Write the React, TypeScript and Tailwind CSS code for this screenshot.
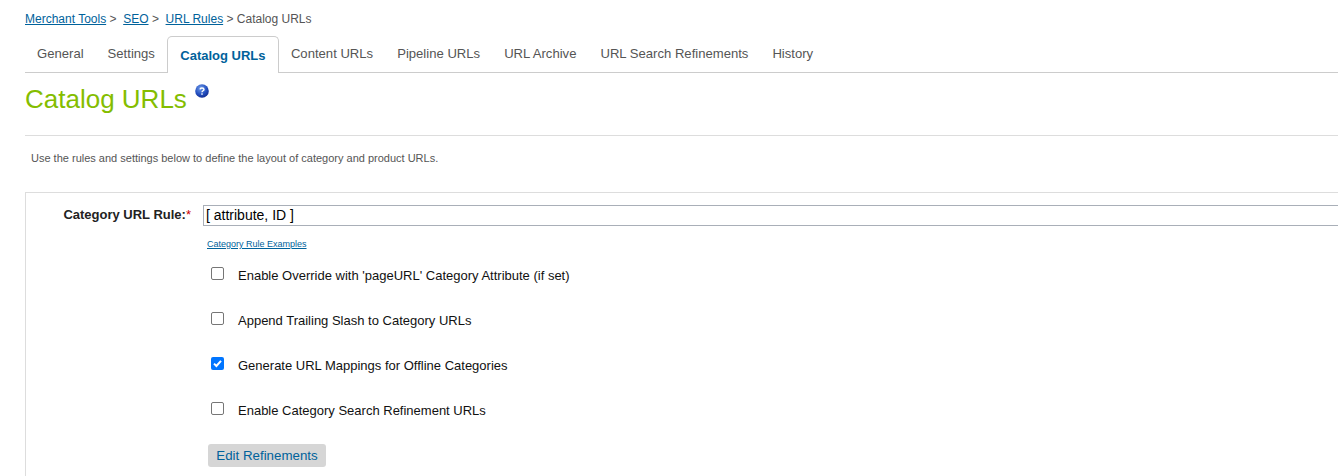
import React from 'react';

const tabs = ['General', 'Settings', 'Catalog URLs', 'Content URLs', 'Pipeline URLs', 'URL Archive', 'URL Search Refinements', 'History'];

const options = [
  { label: "Enable Override with 'pageURL' Category Attribute (if set)", checked: false },
  { label: 'Append Trailing Slash to Category URLs', checked: false },
  { label: 'Generate URL Mappings for Offline Categories', checked: true },
  { label: 'Enable Category Search Refinement URLs', checked: false },
];

function HelpIcon() {
  return (
    <svg width="14" height="14" viewBox="0 0 14 14" className="mb-[17px] ml-2 shrink-0">
      <defs>
        <radialGradient id="help" cx="40%" cy="30%" r="75%">
          <stop offset="0%" stopColor="#6f9be8" />
          <stop offset="60%" stopColor="#2450c0" />
          <stop offset="100%" stopColor="#10288a" />
        </radialGradient>
      </defs>
      <circle cx="7" cy="7" r="6.8" fill="url(#help)" />
      <path d="M5 5.3 C5.2 3.6 9 3.6 9 5.5 C9 6.8 7 6.8 7 8.3" fill="none" stroke="#fff" strokeWidth="1.4" />
      <rect x="6.3" y="9.3" width="1.4" height="1.5" fill="#fff" />
    </svg>
  );
}

function Check({ checked }: { checked: boolean }) {
  if (checked) {
    return (
      <span className="flex h-[13px] w-[13px] items-center justify-center rounded-[2px] bg-[#0075ff]">
        <svg width="11" height="11" viewBox="0 0 11 11">
          <path d="M2 5.6 L4.4 8 L9 2.8" fill="none" stroke="#fff" strokeWidth="2" />
        </svg>
      </span>
    );
  }
  return <span className="block h-[13px] w-[13px] rounded-[2px] border border-[#767676] bg-white" />;
}

export default function App() {
  return (
    <div className="flex h-[476px] w-[1338px] flex-col overflow-hidden bg-white pl-[25px] font-['Liberation_Sans',Arial,sans-serif]">
      {/* Breadcrumb */}
      <div className="flex h-[36px] shrink-0 items-start whitespace-pre pt-[12px] text-[12px] leading-[14px] text-[#555]">
        <a className="text-[#00629b] underline">Merchant Tools</a>
        <span> {'>'}  </span>
        <a className="text-[#00629b] underline">SEO</a>
        <span> {'>'}  </span>
        <a className="text-[#00629b] underline">URL Rules</a>
        <span> {'>'} Catalog URLs</span>
      </div>

      {/* Tabs */}
      <div className="flex h-[37px] shrink-0 border-b border-[#ccc]">
        {tabs.map((t) =>
          t === 'Catalog URLs' ? (
            <div
              key={t}
              className="mb-[-1px] flex h-[37px] w-[112px] items-center justify-center rounded-t-[5px] border border-b-0 border-[#ccc] bg-white pt-[1px] text-[13px] font-bold text-[#00629b]"
            >
              {t}
            </div>
          ) : (
            <div key={t} className="flex items-center px-[12px] text-[13.1px] text-[#555]">
              {t}
            </div>
          )
        )}
      </div>

      {/* Title */}
      <div className="flex h-[63px] shrink-0 items-start border-b border-[#ddd] pt-[10px]">
        <div className="flex items-center">
          <h1 className="text-[26px] leading-[32px] font-normal text-[#84bd00]">Catalog URLs</h1>
          <HelpIcon />
        </div>
      </div>

      <p className="mt-[15px] ml-[6px] shrink-0 text-[11px] leading-[14px] text-[#555]">
        Use the rules and settings below to define the layout of category and product URLs.
      </p>

      {/* Form panel */}
      <div className="mt-[27px] flex flex-1 border-t border-l border-[#ddd] pt-[12px]">
        <div className="w-[177px] shrink-0 pt-[3px] pr-[12px] text-right text-[13px] leading-[14px] font-bold whitespace-nowrap text-[#222]">
          Category URL Rule:<span className="font-normal text-[#c00]">*</span>
        </div>
        <div className="min-w-0 flex-1">
          <div className="h-[21px] w-[1200px] border border-[#a9afb8] pl-[2px] text-[14px] leading-[19px] text-black">[ attribute, ID ]</div>
          <a className="mt-[13px] ml-[4px] block text-[9px] leading-[11px] text-[#00629b] underline">Category Rule Examples</a>
          <div className="mt-[16px] flex flex-col gap-[29px] pl-[8px]">
            {options.map((o) => (
              <div key={o.label} className="flex h-[16px] items-center gap-[14px] text-[13px] text-[#111]">
                <span className="-mt-[2px]">
                  <Check checked={o.checked} />
                </span>
                <span className="mt-[4px]">{o.label}</span>
              </div>
            ))}
          </div>
          <button className="mt-[27px] ml-[5px] h-[23px] w-[118px] rounded-[3px] bg-[#d6d6d6] text-[13.33px] text-[#00629b]">Edit Refinements</button>
        </div>
      </div>
    </div>
  );
}
